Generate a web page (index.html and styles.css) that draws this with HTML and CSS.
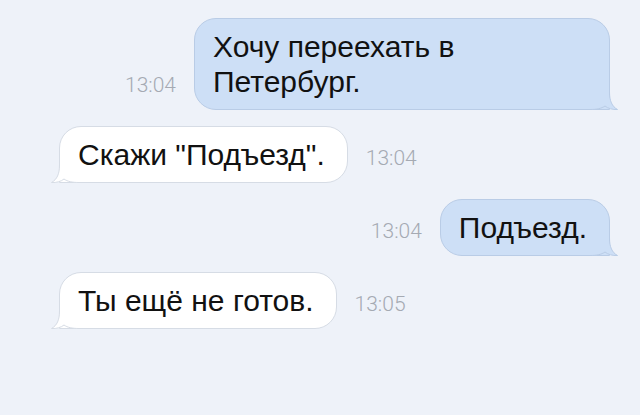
FILE: index.html
```html
<!DOCTYPE html>
<html lang="ru">
<head>
    <meta charset="UTF-8">
    <meta name="viewport" content="width=device-width, initial-scale=1.0">
    <title>Сообщения</title>
    <link rel="stylesheet" href="styles.css">
</head>
<body>

<div class="chat">
    <div class="row out">
        <span class="time">13:04</span>
        <div class="bubble wide">
            Хочу переехать в Петербург.
            <svg class="tail" width="28" height="28" viewBox="0 0 28 28">
                <path class="tail-fill" d="M0,0 H19.5 V10 C19.5,19 22,24.5 27.5,27.5 C22.5,27.8 18,26.5 15,24 C11.5,26.5 7,27.5 0,27.5 Z"/>
                <path class="tail-line" d="M19.5,0 V10 C19.5,19 22,24.5 27.5,27.5 C22.5,27.8 18,26.5 15,24 C11.5,26.5 7,27.5 0,27.5"/>
            </svg>
        </div>
    </div>

    <div class="row in">
        <div class="bubble">
            Скажи "Подъезд".
            <svg class="tail" width="28" height="28" viewBox="0 0 28 28">
                <path class="tail-fill" d="M0,0 H19.5 V10 C19.5,19 22,24.5 27.5,27.5 C22.5,27.8 18,26.5 15,24 C11.5,26.5 7,27.5 0,27.5 Z"/>
                <path class="tail-line" d="M19.5,0 V10 C19.5,19 22,24.5 27.5,27.5 C22.5,27.8 18,26.5 15,24 C11.5,26.5 7,27.5 0,27.5"/>
            </svg>
        </div>
        <span class="time">13:04</span>
    </div>

    <div class="row out">
        <span class="time">13:04</span>
        <div class="bubble">
            Подъезд.
            <svg class="tail" width="28" height="28" viewBox="0 0 28 28">
                <path class="tail-fill" d="M0,0 H19.5 V10 C19.5,19 22,24.5 27.5,27.5 C22.5,27.8 18,26.5 15,24 C11.5,26.5 7,27.5 0,27.5 Z"/>
                <path class="tail-line" d="M19.5,0 V10 C19.5,19 22,24.5 27.5,27.5 C22.5,27.8 18,26.5 15,24 C11.5,26.5 7,27.5 0,27.5"/>
            </svg>
        </div>
    </div>

    <div class="row in">
        <div class="bubble">
            Ты ещё не готов.
            <svg class="tail" width="28" height="28" viewBox="0 0 28 28">
                <path class="tail-fill" d="M0,0 H19.5 V10 C19.5,19 22,24.5 27.5,27.5 C22.5,27.8 18,26.5 15,24 C11.5,26.5 7,27.5 0,27.5 Z"/>
                <path class="tail-line" d="M19.5,0 V10 C19.5,19 22,24.5 27.5,27.5 C22.5,27.8 18,26.5 15,24 C11.5,26.5 7,27.5 0,27.5"/>
            </svg>
        </div>
        <span class="time">13:05</span>
    </div>
</div>

</body>
</html>
```

FILE: styles.css
```css
body {
    margin: 0;
    background-color: #eef2f9;
    font-family: "Liberation Sans", Arial, sans-serif;
    color: #111;
}

.chat {
    display: flex;
    flex-direction: column;
    gap: 16px;
    padding: 18px 30px 0 59px;
}

.row {
    display: flex;
    align-items: last baseline;
    gap: 18px;
}

.row.out {
    justify-content: flex-end;
}

.time {
    font-family: Roboto, "Liberation Sans", sans-serif;
    font-weight: 300;
    font-size: 21px;
    color: #a5aab3;
}

.bubble {
    position: relative;
    padding: 10px 22px 10px 18px;
    font-size: 30px;
    line-height: 35px;
    border: 1px solid;
    border-radius: 22px;
}

.bubble.wide {
    width: 416px;
    box-sizing: border-box;
}

.tail {
    position: absolute;
    bottom: -1px;
    display: block;
}

.tail-line {
    fill: none;
    stroke-width: 1;
}

/* исходящие — голубые, хвост справа */
.out .bubble {
    background-color: #cddff6;
    border-color: #b9cce6;
    border-bottom-right-radius: 0;
}

.out .tail {
    right: -9px;
}

.out .tail-fill {
    fill: #cddff6;
}

.out .tail-line {
    stroke: #b9cce6;
}

/* входящие — белые, хвост слева */
.in .bubble {
    background-color: #fff;
    border-color: #d6dce5;
    border-bottom-left-radius: 0;
}

.in .tail {
    left: -9px;
    transform: scaleX(-1);
}

.in .tail-fill {
    fill: #fff;
}

.in .tail-line {
    stroke: #d6dce5;
}
```
